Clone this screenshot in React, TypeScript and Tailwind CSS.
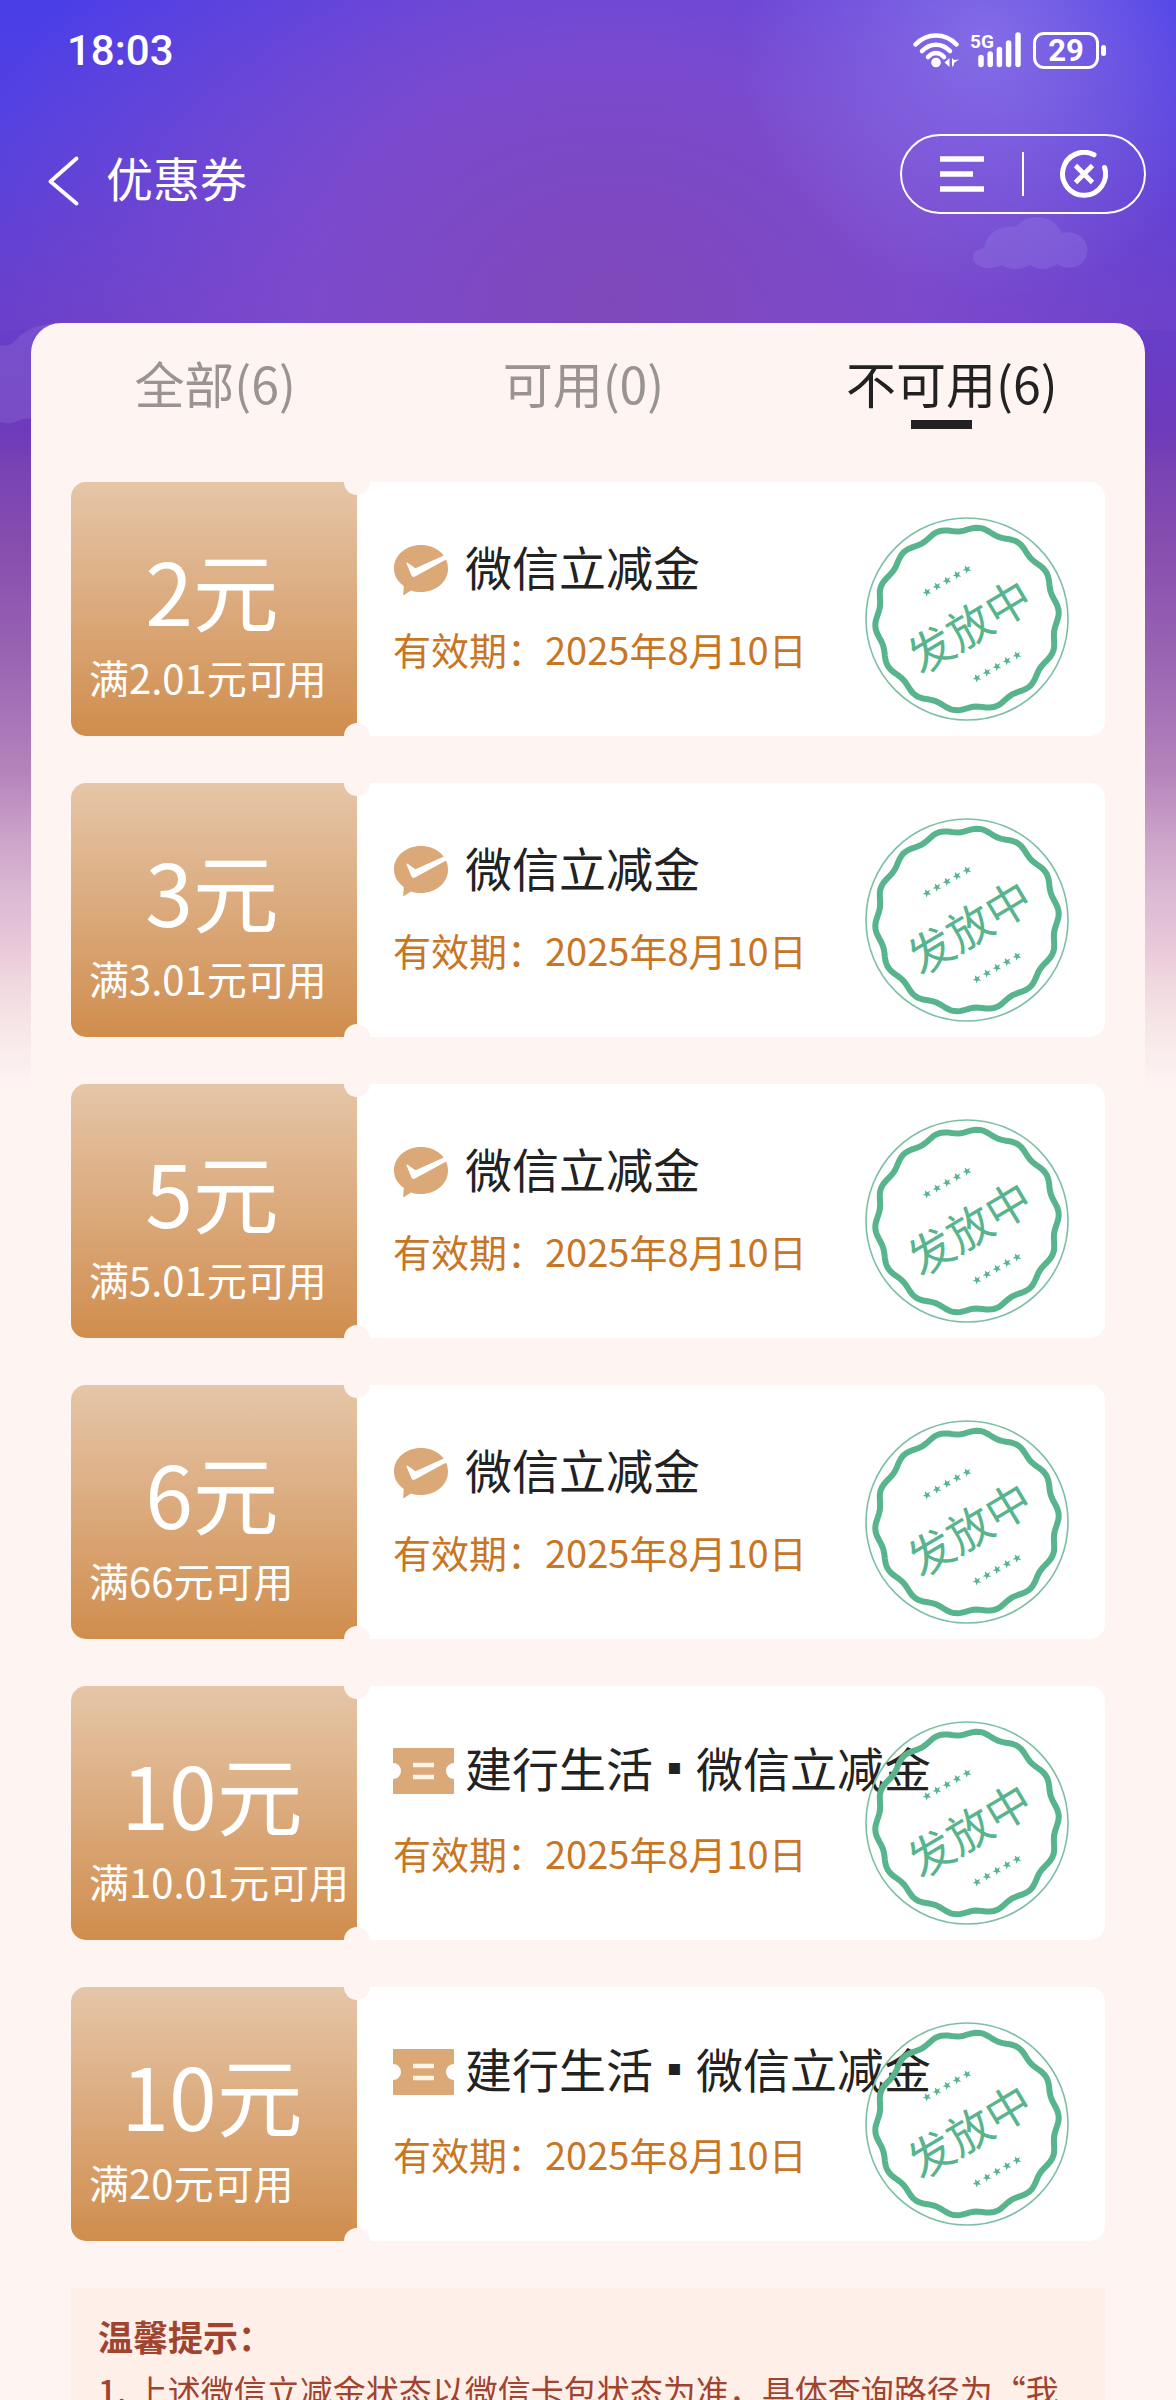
import React from "react";

type Coupon = {
  id: number;
  amount: string;
  condition: string;
  kind: "wechat" | "ccb";
  title: string[];
  expire: string;
};

const EXPIRE = "2025年8月10日";

const coupons: Coupon[] = [
  { id: 1, amount: "2元", condition: "满2.01元可用", kind: "wechat", title: ["微信立减金"], expire: EXPIRE },
  { id: 2, amount: "3元", condition: "满3.01元可用", kind: "wechat", title: ["微信立减金"], expire: EXPIRE },
  { id: 3, amount: "5元", condition: "满5.01元可用", kind: "wechat", title: ["微信立减金"], expire: EXPIRE },
  { id: 4, amount: "6元", condition: "满66元可用", kind: "wechat", title: ["微信立减金"], expire: EXPIRE },
  { id: 5, amount: "10元", condition: "满10.01元可用", kind: "ccb", title: ["建行生活", "微信立减金"], expire: EXPIRE },
  { id: 6, amount: "10元", condition: "满20元可用", kind: "ccb", title: ["建行生活", "微信立减金"], expire: EXPIRE },
];

const tabs = [
  { name: "全部(6)", active: false },
  { name: "可用(0)", active: false },
  { name: "不可用(6)", active: true },
];

// 印章的波浪边
const wavePath = (() => {
  const points: string[] = [];
  for (let deg = 0; deg < 360; deg += 2) {
    const r = 90 + 2 * Math.cos((14 * (deg - 82) * Math.PI) / 180);
    const rad = (deg * Math.PI) / 180;
    points.push(`${(102 + r * Math.cos(rad)).toFixed(1)} ${(102 - r * Math.sin(rad)).toFixed(1)}`);
  }
  return `M${points.join("L")}Z`;
})();

const starPath =
  "M0-4.4 1.2-1.4 4.3-1.3 1.8.6 2.7 3.6 0 1.8-2.7 3.6-1.8.6-4.3-1.3-1.2-1.4Z";

const Stamp = () => (
  <svg
    className="absolute top-[35px] right-[36px] w-[204px] h-[204px]"
    viewBox="0 0 204 204"
    role="img"
    aria-label="发放中"
  >
    <circle cx="102" cy="102" r="101" fill="none" stroke="#7cc0a4" strokeWidth="1.6" />
    <path d={wavePath} fill="none" stroke="#58b48c" strokeWidth="6" strokeLinejoin="round" />
    {[0, 1, 2, 3, 4].map((i) => (
      <g key={i} fill="#58b48c">
        <path d={starPath} transform={`translate(${62 + i * 10} ${75 - i * 5.7}) rotate(-30)`} />
        <path d={starPath} transform={`translate(${112 + i * 10} ${161 - i * 5.7}) rotate(-30)`} />
      </g>
    ))}
    <text
      transform="translate(105 110) rotate(-31)"
      textAnchor="middle"
      y="16"
      fontSize="45"
      fill="#58b48c"
    >
      发放中
    </text>
  </svg>
);

const WechatIcon = () => (
  <svg className="w-[56px] h-[52px]" viewBox="0 0 56 52" aria-hidden="true">
    <path
      d="M28 1C43 1 55 11 55 24.500S43 48 28 48C24.500 48 21 47.500 18 46.500L11 51Q10 51.500 10.200 50L10.800 42C4.500 37.500 1 31.500 1 24.500 1 11 13 1 28 1Z"
      fill="#dba878"
    />
    <path
      d="M13.500 19.500Q13 18 14.600 18.800L22.500 24.200 52.500 10.800 55 14.500 22 32.500Q19.500 33.800 18.500 31.500Z"
      fill="#fff"
    />
  </svg>
);

const TicketIcon = () => (
  <svg className="w-[61px] h-[46px]" viewBox="0 0 61 46" aria-hidden="true">
    <path
      d="M1 0H60Q61 0 61 1V15A8 8 0 0 0 61 31V45Q61 46 60 46H1Q0 46 0 45V31A8 8 0 0 0 0 15V1Q0 0 1 0Z"
      fill="#dba878"
    />
    <path d="M20 17H41M20 29H41" stroke="#fff4e6" strokeWidth="4.500" />
  </svg>
);

const StatusBar = () => (
  <div className="flex items-center justify-between h-[100px] pl-[67px] pr-[70px] font-[Roboto,'Noto_Sans',sans-serif]">
    <span className="pt-[2px] text-[42px] leading-none font-medium">18:03</span>
    <div className="flex items-center gap-[11px]">
      <svg className="w-[47px] h-[35px]" viewBox="0 0 47 35" aria-hidden="true">
        <g fill="none" stroke="currentColor" strokeWidth="4.500" strokeLinecap="round">
          <path d="M2.500 11.500C14-.5 32-.5 43.500 11.500" />
          <path d="M9 18C17 9.500 29 9.500 37 18" />
          <path d="M15 24C20 18.500 26 18.500 31 24" />
        </g>
        <circle cx="23" cy="29.500" r="4.800" fill="currentColor" />
        <path d="M36.500 25V34L31.500 29.500ZM39 25V34L41 32V30L46 26.500 41 27Z" fill="currentColor" />
      </svg>
      <svg className="w-[51px] h-[36px] overflow-visible" viewBox="0 0 51 36" aria-hidden="true">
        <text x="-1" y="16" fontSize="19" fontWeight="700" fill="currentColor">
          5G
        </text>
        <path
          d="M10 25.500V32.500M19.200 22V32.500M28.400 17.500V32.500M37.600 11V32.500M47 3V32.500"
          stroke="currentColor"
          strokeWidth="5.500"
          strokeLinecap="round"
        />
      </svg>
      <div className="flex items-center gap-[2px]">
        <span className="flex items-center justify-center w-[66px] h-[37px] rounded-[11px] border-[3px] border-white text-[31px] leading-none font-bold">
          29
        </span>
        <span className="w-[5px] h-[11px] rounded-full bg-white" />
      </div>
    </div>
  </div>
);

const Header = () => (
  <header className="flex items-center justify-between h-[148px] pl-[48px] pr-[30px]">
    <div className="flex items-center gap-[27px] pt-[14px]">
      <button type="button" aria-label="返回">
        <svg className="block w-[31px] h-[50px]" viewBox="0 0 31 50" aria-hidden="true">
          <path
            d="M28.500 2.500 2.500 25.500 28.500 47.500"
            fill="none"
            stroke="currentColor"
            strokeWidth="3.800"
            strokeLinecap="round"
            strokeLinejoin="round"
          />
        </svg>
      </button>
      <h1 className="pb-[8px] text-[47px] leading-[56px]">优惠券</h1>
    </div>
    <div className="flex items-center w-[246px] h-[80px] rounded-full border-2 border-white">
      <button type="button" aria-label="菜单" className="flex-1 flex justify-center">
        <svg className="w-[44px] h-[36px]" viewBox="0 0 44 36" aria-hidden="true">
          <path d="M0 3H44M0 18H33M0 33H44" stroke="currentColor" strokeWidth="5.500" />
        </svg>
      </button>
      <span className="w-[2px] h-[44px] bg-white" />
      <button type="button" aria-label="关闭" className="flex-1 flex justify-center">
        <svg className="w-[48px] h-[48px]" viewBox="0 0 48 48" aria-hidden="true">
          <g fill="none" stroke="currentColor" strokeWidth="5" strokeLinecap="round">
            <path d="M34 4.800A21.500 21.500 0 1 0 44.600 17.500" />
            <path d="M15.500 15.500 32.500 32.500M32.500 15.500 15.500 32.500" strokeWidth="4.800" strokeLinecap="butt" />
          </g>
        </svg>
      </button>
    </div>
  </header>
);

const Backdrop = () => (
  <div className="absolute inset-x-0 top-0 h-[1090px] bg-[linear-gradient(180deg,#4a3ee8_0px,#5441e0_130px,#673ecb_310px,#6d3abb_430px,#7641b4_460px,#8a50ae_560px,#9b66b3_666px,#b583bb_771px,#cfa8cb_849px,#ddbcd5_901px,#ebcada_954px,#efd8de_980px,#f7e8e8_1032px,#fef5f3_1090px)]">
    <div className="h-[330px] bg-[radial-gradient(ellipse_250px_260px_at_84%_40px,rgba(146,124,234,0.7),rgba(146,124,234,0)),radial-gradient(ellipse_56%_560px_at_52%_300px,rgba(128,72,186,0.98)_0%,rgba(128,76,204,0.85)_45%,rgba(118,82,222,0)_100%)]" />
    <svg
      className="absolute top-[216px] right-[88px] w-[116px] h-[54px]"
      viewBox="0 0 116 54"
      aria-hidden="true"
    >
      <path
        d="M12 32C14 18 28 8 44 11 54-3 82-3 90 17 108 13 118 28 115 38 112 52 96 55 85 48 76 55 66 54 58 49 48 55 36 54 30 49 20 54 10 52 8 50-2 46-2 34 12 32Z"
        fill="#a08cec"
        fillOpacity="0.25"
      />
    </svg>
    <svg
      className="absolute top-[320px] left-0 w-[60px] h-[106px]"
      viewBox="0 0 60 106"
      aria-hidden="true"
    >
      <path d="M0 25Q8 27 14 22 28 4 60 3V104Q40 96 22 99 10 106 0 102Z" fill="#b496e6" fillOpacity="0.2" />
    </svg>
  </div>
);

type Props = {
  coupon: Coupon;
};

const CouponItem = ({ coupon }: Props) => {
  return (
    <li className="relative flex h-[254px]">
      <div className="w-[286px] shrink-0 rounded-l-[15px] bg-linear-to-b from-[#e5c6a8] to-[#d08d4c] pt-[55px] text-white">
        <p className="pr-[4px] text-center text-[86px] leading-[104px]">{coupon.amount}</p>
        <p className="mt-[4px] pl-[18px] text-[40px] leading-[64px] whitespace-nowrap">{coupon.condition}</p>
      </div>
      <div className="flex-1 rounded-[15px] bg-white pt-[58px] pl-[36px]">
        <div className="flex items-center h-[56px] text-[47px] leading-[56px] text-[#222] whitespace-nowrap">
          <span className={coupon.kind === "wechat" ? "w-[72px] shrink-0 pt-[4px]" : "w-[72px] shrink-0 pb-[3px]"}>
            {coupon.kind === "wechat" ? <WechatIcon /> : <TicketIcon />}
          </span>
          <h2 className={coupon.kind === "wechat" ? "flex pb-[4px]" : "flex pb-[10px]"}>
            {coupon.title.map((part, i) => (
              <React.Fragment key={part}>
                {i > 0 && (
                  <span className="w-[43px] text-center text-[22px] font-['DejaVu_Sans',sans-serif]">▪</span>
                )}
                <span>{part}</span>
              </React.Fragment>
            ))}
          </h2>
        </div>
        <p className="mt-[29px] text-[38px] leading-[48px] text-[#c87524]">有效期：{coupon.expire}</p>
      </div>
      <span className="absolute -top-[13px] left-[273px] size-[26px] rounded-full bg-[#fef5f3]" />
      <span className="absolute -bottom-[13px] left-[273px] size-[26px] rounded-full bg-[#fef5f3]" />
      <Stamp />
    </li>
  );
};

const App = () => {
  return (
    <div
      lang="zh-CN"
      className="relative h-screen overflow-hidden bg-[#fef5f3] font-['Noto_Sans_CJK_SC',sans-serif]"
    >
      <Backdrop />
      <div className="relative text-white">
        <StatusBar />
        <Header />
      </div>
      <main className="relative mt-[75px] mx-[31px] rounded-t-[30px] bg-[#fef5f3] pb-10">
        <nav className="grid grid-cols-3 h-[159px] pt-[23px] pr-[9px]">
          {tabs.map((tab) => (
            <button
              key={tab.name}
              type="button"
              className={`flex flex-col items-center self-start text-[50px] leading-[72px] ${
                tab.active ? "text-[#222]" : "text-[#999391]"
              }`}
            >
              {tab.name}
              {tab.active && <span className="w-[61px] h-[9px] mt-[2px] mr-[20px] bg-[#222]" />}
            </button>
          ))}
        </nav>
        <ul className="flex flex-col gap-[47px] px-[40px]">
          {coupons.map((coupon) => (
            <CouponItem key={coupon.id} coupon={coupon} />
          ))}
        </ul>
        <section className="mx-[40px] mt-[47px] bg-[#feefe8] px-[27px] py-[21px] text-[33px] leading-[54px] text-[#a04430]">
          <h2 className="text-[35px] font-bold">温馨提示：</h2>
          <p className="whitespace-nowrap">
            <span className="mr-[8px] font-medium">1.</span>
            上述微信立减金状态以微信卡包状态为准，具体查询路径为“我
          </p>
        </section>
      </main>
    </div>
  );
};

export default App;
